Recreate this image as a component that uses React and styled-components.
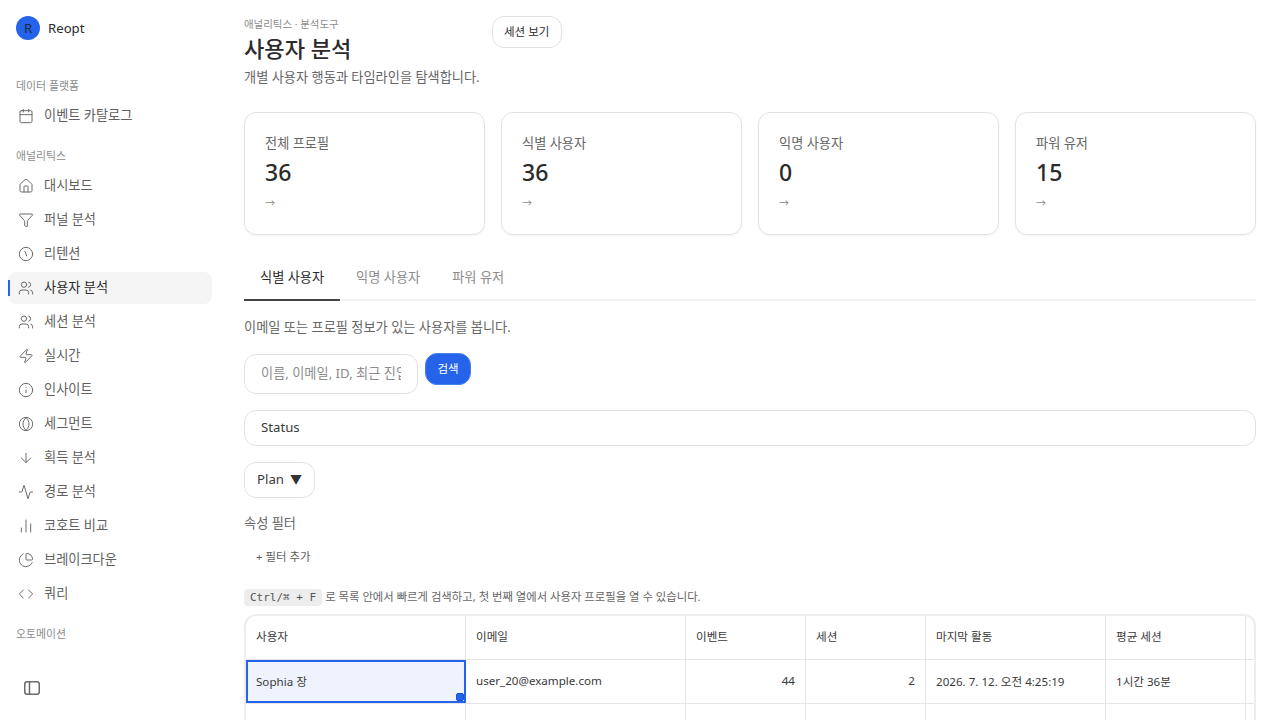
import React from "react"
import styled, { createGlobalStyle } from "styled-components"
import { Calendar, House, Funnel, Users, Zap, Info, ArrowDown, Activity, ChartNoAxesColumn, ChartPie } from "lucide-react"

const GlobalStyle = createGlobalStyle`
    html, body {
        margin: 0;
        height: 100%;
        overflow: hidden;
        background: #ffffff;
    }
    body, input, button {
        font-family: "Noto Sans", "Noto Sans CJK KR", sans-serif;
    }
    * { box-sizing: border-box; }
`

function ClockIcon() {
    return (
        <svg width="16" height="16" viewBox="0 0 24 24" fill="none" stroke="currentColor" strokeWidth="1.5" strokeLinecap="round">
            <circle cx="12" cy="12" r="10" />
            <path d="M10.5 8l2.5 7" />
        </svg>
    )
}

function SegmentIcon() {
    return (
        <svg width="16" height="16" viewBox="0 0 24 24" fill="none" stroke="currentColor" strokeWidth="1.5">
            <circle cx="12" cy="12" r="10" />
            <path d="M12 2.5c-6 5.5-6 13.5 0 19M12 2.5c6 5.5 6 13.5 0 19" />
        </svg>
    )
}

function CodeIcon() {
    return (
        <svg width="16" height="16" viewBox="0 0 24 24" fill="none" stroke="currentColor" strokeWidth="1.5" strokeLinecap="round" strokeLinejoin="round">
            <path d="M8 6l-6 6 6 6M16 6l6 6-6 6" />
        </svg>
    )
}

function PanelIcon() {
    return (
        <svg width="16" height="14" viewBox="0 0 16 14" fill="none" stroke="currentColor" strokeWidth="1.5">
            <rect x="0.75" y="0.75" width="14.5" height="12.5" rx="2.5" />
            <path d="M5.5 1v12" />
        </svg>
    )
}

const ic = { size: 16, strokeWidth: 1.5 }

const analytics = [
    { label: "대시보드", icon: <House {...ic} /> },
    { label: "퍼널 분석", icon: <Funnel {...ic} /> },
    { label: "리텐션", icon: <ClockIcon /> },
    { label: "사용자 분석", icon: <Users {...ic} />, active: true },
    { label: "세션 분석", icon: <Users {...ic} /> },
    { label: "실시간", icon: <Zap {...ic} /> },
    { label: "인사이트", icon: <Info {...ic} /> },
    { label: "세그먼트", icon: <SegmentIcon /> },
    { label: "획득 분석", icon: <ArrowDown {...ic} /> },
    { label: "경로 분석", icon: <Activity {...ic} /> },
    { label: "코호트 비교", icon: <ChartNoAxesColumn {...ic} /> },
    { label: "브레이크다운", icon: <ChartPie {...ic} /> },
    { label: "쿼리", icon: <CodeIcon /> },
]

const stats = [
    { label: "전체 프로필", value: "36" },
    { label: "식별 사용자", value: "36" },
    { label: "익명 사용자", value: "0" },
    { label: "파워 유저", value: "15" },
]

export default function App() {
    return (
        <Page>
            <GlobalStyle />
            <Sidebar>
                <Brand>
                    <Avatar>R</Avatar>
                    <BrandName>Reopt</BrandName>
                </Brand>
                <NavTitle>데이터 플랫폼</NavTitle>
                <NavItem><NavIcon><Calendar {...ic} /></NavIcon>이벤트 카탈로그</NavItem>
                <NavTitle $spaced>애널리틱스</NavTitle>
                <NavList>
                    {analytics.map(item => (
                        <NavItem key={item.label} $active={item.active}>
                            <NavIcon>{item.icon}</NavIcon>
                            {item.label}
                        </NavItem>
                    ))}
                </NavList>
                <NavTitle $spaced>오토메이션</NavTitle>
                <SidebarToggle><PanelIcon /></SidebarToggle>
            </Sidebar>
            <Main>
                <Header>
                    <div>
                        <Crumb>애널리틱스 · 분석도구</Crumb>
                        <Title>사용자 분석</Title>
                        <Subtitle>개별 사용자 행동과 타임라인을 탐색합니다.</Subtitle>
                    </div>
                    <GhostButton>세션 보기</GhostButton>
                </Header>
                <StatGrid>
                    {stats.map(s => (
                        <StatCard key={s.label}>
                            <StatLabel>{s.label}</StatLabel>
                            <StatValue>{s.value}</StatValue>
                            <StatArrow>→</StatArrow>
                        </StatCard>
                    ))}
                </StatGrid>
                <Tabs>
                    <Tab $active>식별 사용자</Tab>
                    <Tab>익명 사용자</Tab>
                    <Tab>파워 유저</Tab>
                </Tabs>
                <Hint>이메일 또는 프로필 정보가 있는 사용자를 봅니다.</Hint>
                <SearchRow>
                    <SearchInput placeholder="이름, 이메일, ID, 최근 진입 경로 검색" />
                    <SearchButton>검색</SearchButton>
                </SearchRow>
                <StatusBox>Status</StatusBox>
                <PlanSelect>Plan <PlanCaret>▼</PlanCaret></PlanSelect>
                <FilterLabel>속성 필터</FilterLabel>
                <AddFilter>+ 필터 추가</AddFilter>
                <Shortcut><Kbd>Ctrl/⌘ + F</Kbd> 로 목록 안에서 빠르게 검색하고, 첫 번째 열에서 사용자 프로필을 열 수 있습니다.</Shortcut>
                <TableWrap>
                    <TableRow>
                        <HeadCell $w={220}>사용자</HeadCell>
                        <HeadCell $w={220}>이메일</HeadCell>
                        <HeadCell $w={120}>이벤트</HeadCell>
                        <HeadCell $w={120}>세션</HeadCell>
                        <HeadCell $w={180}>마지막 활동</HeadCell>
                        <HeadCell $w={140}>평균 세션</HeadCell>
                        <HeadCell $w={12} />
                    </TableRow>
                    <TableRow>
                        <SelectedCell $w={220}>Sophia 장<FillHandle /></SelectedCell>
                        <Cell $w={220}>user_20@example.com</Cell>
                        <Cell $w={120} $right>44</Cell>
                        <Cell $w={120} $right>2</Cell>
                        <Cell $w={180}>2026. 7. 12. 오전 4:25:19</Cell>
                        <Cell $w={140}>1시간 36분</Cell>
                        <Cell $w={12} />
                    </TableRow>
                    <TableRow>
                        <Cell $w={220} />
                        <Cell $w={220} />
                        <Cell $w={120} />
                        <Cell $w={120} />
                        <Cell $w={180} />
                        <Cell $w={140} />
                        <Cell $w={12} />
                    </TableRow>
                </TableWrap>
            </Main>
        </Page>
    )
}

const Page = styled.div`
    display: flex;
    width: 1280px;
    height: 720px;
    overflow: hidden;
    background: #ffffff;
    color: #2b2b2b;
`
const Sidebar = styled.aside`
    position: relative;
    width: 220px;
    flex-shrink: 0;
    padding: 16px 8px 0;
    height: 720px;
`
const Brand = styled.div`
    display: flex;
    align-items: center;
    gap: 8px;
    padding: 0 8px;
    height: 24px;
    margin-bottom: 38px;
`
const Avatar = styled.div`
    width: 24px;
    height: 24px;
    border-radius: 50%;
    background: #2563eb;
    color: #1f2a44;
    font-size: 13.2px;
    display: flex;
    align-items: center;
    justify-content: center;
`
const BrandName = styled.span`
    font-size: 13.2px;
    color: #2b2b2b;
`
const NavTitle = styled.div`
    font-size: 10.9px;
    line-height: 16px;
    color: #8c8c8c;
    padding: 0 8px;
    margin-top: ${p => (p.$spaced ? "16px" : "0")};
    margin-bottom: 6px;
`
const NavList = styled.div`
    display: flex;
    flex-direction: column;
    gap: 2px;
`
const NavItem = styled.div`
    position: relative;
    display: flex;
    align-items: center;
    gap: 10px;
    height: 32px;
    width: 204px;
    padding: 0 10px 4px;
    border-radius: 8px;
    font-size: 13.2px;
    color: ${p => (p.$active ? "#2b2b2b" : "#5f5f5f")};
    background: ${p => (p.$active ? "#f5f5f5" : "transparent")};
    &::before {
        content: ${p => (p.$active ? '""' : "none")};
        position: absolute;
        left: 0;
        top: 8px;
        width: 2px;
        height: 16px;
        background: #2563eb;
    }
`
const NavIcon = styled.span`
    display: flex;
    width: 16px;
    height: 16px;
    margin-top: 4px;
    color: #6b6b6b;
    flex-shrink: 0;
`
const SidebarToggle = styled.div`
    position: absolute;
    left: 24px;
    top: 681px;
    display: flex;
    color: #6b6b6b;
`
const Main = styled.main`
    flex: 1;
    min-width: 0;
    padding: 16px 24px 0;
`
const Header = styled.div`
    display: flex;
    align-items: flex-start;
    gap: 12px;
`
const Crumb = styled.div`
    font-size: 10.45px;
    line-height: 16px;
    color: #8c8c8c;
`
const Title = styled.h1`
    margin: 0;
    font-size: 22.1px;
    line-height: 32px;
    font-weight: 500;
    color: #2b2b2b;
`
const Subtitle = styled.p`
    margin: 3px 0 0;
    font-size: 13.2px;
    line-height: 20px;
    color: #666666;
`
const GhostButton = styled.button`
    height: 32px;
    width: 70px;
    padding: 0 0 2px;
    border: 1px solid #e2e2e2;
    border-radius: 12px;
    background: #ffffff;
    color: #2b2b2b;
    font-size: 11.5px;
`
const StatGrid = styled.div`
    display: grid;
    grid-template-columns: repeat(4, 1fr);
    gap: 16px;
    margin-top: 25px;
`
const StatCard = styled.div`
    height: 123px;
    padding: 20px;
    border: 1px solid #e2e2e2;
    border-radius: 12px;
    box-shadow: 0 1px 2px rgba(0, 0, 0, 0.05);
`
const StatLabel = styled.div`
    font-size: 13.2px;
    line-height: 20px;
    color: #666666;
`
const StatValue = styled.div`
    font-size: 23px;
    line-height: 32px;
    font-weight: 500;
    color: #2b2b2b;
    margin-top: 3px;
`
const StatArrow = styled.div`
    font-size: 10px;
    line-height: 20px;
    color: #8c8c8c;
    margin-top: 5px;
`
const Tabs = styled.div`
    display: flex;
    margin-top: 20px;
    border-bottom: 2px solid #f2f2f2;
    height: 46px;
`
const Tab = styled.div`
    height: 46px;
    padding: 0 16px 1px;
    display: flex;
    align-items: center;
    font-size: 13.2px;
    color: ${p => (p.$active ? "#2b2b2b" : "#8c8c8c")};
    border-bottom: 2px solid ${p => (p.$active ? "#444444" : "transparent")};
`
const Hint = styled.p`
    margin: 16px 0 0;
    font-size: 13.2px;
    line-height: 20px;
    color: #666666;
`
const SearchRow = styled.div`
    display: flex;
    align-items: flex-start;
    gap: 8px;
    margin-top: 17px;
`
const SearchInput = styled.input`
    width: 174px;
    height: 40px;
    padding: 0 16px 2px;
    border: 1px solid #e2e2e2;
    border-radius: 12px;
    font-size: 13.2px;
    color: #2b2b2b;
    outline: none;
    &::placeholder { color: #8c8c8c; }
`
const SearchButton = styled.button`
    width: 46px;
    height: 32px;
    margin: -1px 0 0 -1px;
    padding: 0 0 2px;
    border: 1px solid #4b82ef;
    border-radius: 12px;
    background: #2563eb;
    color: #ffffff;
    font-size: 11.5px;
`
const StatusBox = styled.div`
    display: flex;
    align-items: center;
    height: 36px;
    margin-top: 16px;
    padding: 0 16px 2px;
    border: 1px solid #e2e2e2;
    border-radius: 12px;
    font-size: 13.2px;
    color: #3a3a3a;
`
const PlanSelect = styled.div`
    display: inline-flex;
    align-items: center;
    justify-content: space-between;
    width: 71px;
    height: 36px;
    margin-top: 16px;
    padding: 0 12px 2px;
    border: 1px solid #e2e2e2;
    border-radius: 12px;
    font-size: 13.2px;
    color: #3a3a3a;
`
const PlanCaret = styled.span`
    font-size: 12px;
    color: #333333;
`
const FilterLabel = styled.div`
    margin-top: 15px;
    font-size: 13.2px;
    line-height: 20px;
    color: #666666;
`
const AddFilter = styled.div`
    margin-top: 16px;
    padding-left: 12px;
    font-size: 11.4px;
    line-height: 16px;
    color: #5f5f5f;
`
const Shortcut = styled.div`
    margin-top: 23px;
    font-size: 11.35px;
    line-height: 18px;
    color: #666666;
`
const Kbd = styled.code`
    display: inline-block;
    padding: 0 6px;
    border-radius: 4px;
    background: #ededed;
    font-family: "DejaVu Sans Mono", "Liberation Mono", monospace;
    font-size: 11px;
    line-height: 17px;
    color: #555555;
`
const TableWrap = styled.div`
    margin-top: 8px;
    border: 2px solid #ededed;
    border-bottom: none;
    border-radius: 12px 12px 0 0;
    overflow: hidden;
`
const TableRow = styled.div`
    display: flex;
    height: 44px;
    border-bottom: 1px solid #e5e5e5;
`
const Cell = styled.div`
    position: relative;
    display: flex;
    align-items: center;
    justify-content: ${p => (p.$right ? "flex-end" : "flex-start")};
    width: ${p => p.$w}px;
    flex-shrink: 0;
    padding: 0 10px 2px;
    border-right: 1px solid #e5e5e5;
    font-size: 11.6px;
    color: #3a3a3a;
`
const HeadCell = styled(Cell)`
    padding-bottom: 4px;
`
const SelectedCell = styled(Cell)`
    border: 2px solid #2563eb;
    background: #eef3fd;
    padding: 0 8px 2px;
`
const FillHandle = styled.span`
    position: absolute;
    right: 0;
    bottom: 0;
    width: 8px;
    height: 8px;
    background: #2563eb;
    border: 1px solid #1d4ed8;
    border-radius: 2px;
`
